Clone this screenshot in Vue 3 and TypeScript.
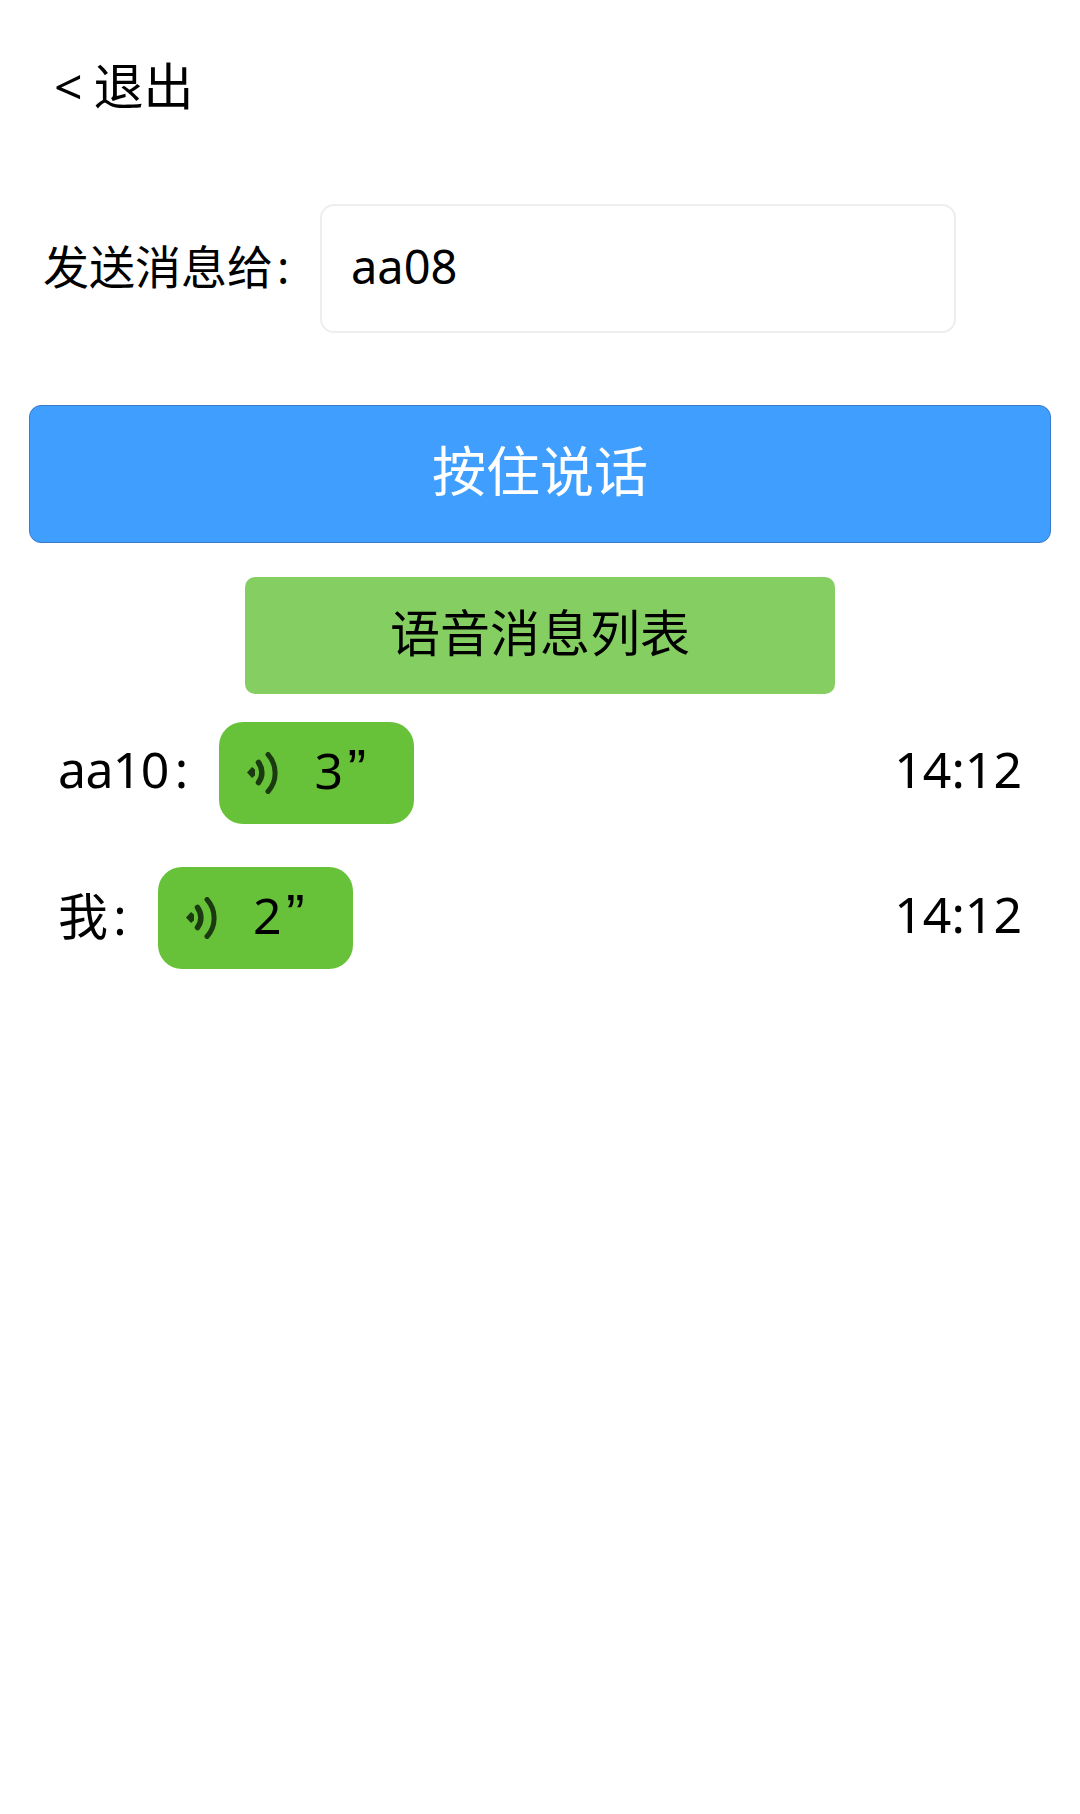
<script setup lang="ts">
import { ref } from 'vue';

interface VoiceMessage {
	id: number;
	from: string;
	seconds: number;
	time: string;
}

const target = ref('aa08');

const messages = ref<VoiceMessage[]>([
	{ id: 1, from: 'aa10', seconds: 3, time: '14:12' },
	{ id: 2, from: '我', seconds: 2, time: '14:12' },
]);
</script>

<template>
	<div class="page">
		<div class="back"><span class="back-arrow">&lt;</span>退出</div>

		<div class="send-row">
			<label class="send-label">发送消息给<span class="send-colon">:</span></label>
			<div class="send-input">{{ target }}</div>
		</div>

		<button class="talk-btn">按住说话</button>
		<button class="list-btn">语音消息列表</button>

		<ul class="msg-list">
			<li v-for="msg in messages" :key="msg.id" class="msg-row">
				<span class="msg-from">{{ msg.from }}<span class="msg-colon">:</span></span>
				<div class="msg-bubble">
					<svg class="msg-icon" viewBox="0 0 32 42" fill="none">
						<path d="M0 20.5 L5 15 L8 17.5 V23.5 L5 26 Z" fill="#1c3a10" />
						<path d="M11.5 10.5 C16 16.5 16 24.5 11.5 30.5" stroke="#1c3a10" stroke-width="5.5" stroke-linecap="round" />
						<path d="M21 2.5 C30.5 13 30.5 29 21 39.5" stroke="#1c3a10" stroke-width="5" stroke-linecap="round" />
					</svg>
					<span class="msg-seconds">{{ msg.seconds }}<span class="msg-quote">”</span></span>
				</div>
				<span class="msg-time">{{ msg.time }}</span>
			</li>
		</ul>
	</div>
</template>

<style>
body {
	background: #fff;
}
</style>

<style scoped>
.page {
	box-sizing: border-box;
	height: 1814px;
	padding-top: 53px;
	background: #fff;
	color: #000;
	font-family: "Noto Sans", "Noto Sans CJK SC", sans-serif;
}

.back {
	display: flex;
	align-items: center;
	height: 66px;
	padding-left: 54px;
	font-size: 50px;
	line-height: 66px;
}

.back-arrow {
	margin-right: 11px;
}

.send-row {
	display: flex;
	align-items: center;
	margin-top: 85px;
	padding-left: 43px;
}

.send-label {
	width: 277px;
	padding-bottom: 9px;
	font-size: 46px;
	white-space: nowrap;
}

.send-colon {
	margin-left: 4px;
}

.send-input {
	box-sizing: border-box;
	width: 636px;
	height: 129px;
	padding-left: 29px;
	border: 2px solid #eeeeee;
	border-radius: 14px;
	font-size: 47px;
	line-height: 120px;
}

.talk-btn,
.list-btn {
	display: block;
	box-sizing: border-box;
	font-family: inherit;
}

.talk-btn {
	width: 1022px;
	height: 138px;
	margin: 72px 0 0 29px;
	padding: 0 0 11px;
	border: 1px solid #3a7cc8;
	border-radius: 12px;
	background: #409eff;
	color: #fff;
	font-size: 54px;
}

.list-btn {
	width: 590px;
	height: 117px;
	margin: 34px 0 0 245px;
	padding: 0 0 11px;
	border: none;
	border-radius: 10px;
	background: #85ce61;
	color: #000;
	font-size: 50px;
}

.msg-list {
	margin: 28px 0 0;
	padding: 0 58px 0 58px;
	list-style: none;
}

.msg-row {
	display: flex;
	align-items: center;
	height: 102px;
	margin-bottom: 43px;
	font-size: 50px;
}

.msg-from {
	margin-right: 32px;
	padding-bottom: 9px;
	letter-spacing: -0.65px;
}

.msg-colon {
	margin-left: 6px;
}

.msg-bubble {
	display: flex;
	align-items: center;
	box-sizing: border-box;
	width: 195px;
	height: 102px;
	padding-left: 28px;
	border-radius: 24px;
	background: #67c23a;
}

.msg-icon {
	width: 32px;
	height: 42px;
	flex: none;
}

.msg-seconds {
	position: relative;
	margin-left: 35px;
	padding-bottom: 7px;
	font-size: 50px;
}

.msg-quote {
	position: absolute;
	top: 0;
	left: 33px;
	font-family: "Liberation Sans", sans-serif;
	font-size: 56px;
}

.msg-time {
	margin-left: auto;
	padding-bottom: 9px;
	font-size: 50px;
}
</style>
